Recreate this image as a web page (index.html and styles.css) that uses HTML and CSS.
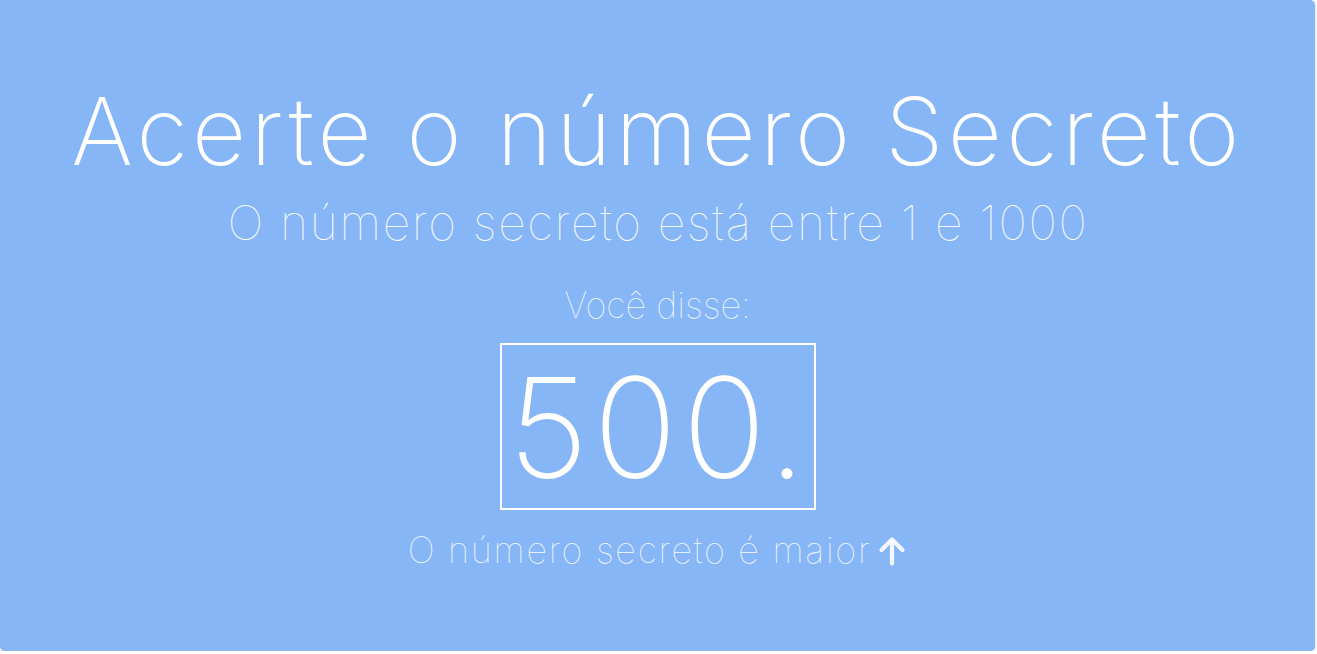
FILE: index.html
```html
<!DOCTYPE html>
<html lang="pt-BR">
<head>
<meta charset="utf-8">
<title>Acerte o número Secreto</title>
<link rel="stylesheet" href="styles.css">
</head>
<body>
<main class="panel">
  <h1 class="title">Acerte o número Secreto</h1>
  <h3 class="subtitle">O número secreto está entre 1 e 1000</h3>
  <p class="said">Você disse:</p>
  <div class="guess-box"><span class="guess">500.</span></div>
  <div class="hint">
    <span>O número secreto é maior</span>
    <svg class="arrow" width="30" height="31" viewBox="0 0 30 31" aria-hidden="true">
      <path d="M15 28.5V4.5M4.5 15L15 4.5L25.5 15" fill="none" stroke="#f3f7ff" stroke-width="4.2" stroke-linecap="round" stroke-linejoin="round"/>
    </svg>
  </div>
</main>
</body>
</html>
```
FILE: styles.css
```css
html, body {
  margin: 0;
  padding: 0;
  background: #ffffff;
}

.panel {
  box-sizing: border-box;
  width: 1315px;
  height: 651px;
  background: #87b6f7;
  border-radius: 0 5px 5px 5px;
  box-shadow: 0 1px 3px rgba(0, 0, 0, 0.18);
  display: flex;
  flex-direction: column;
  align-items: center;
  padding-top: 84px;
  font-family: "Inter", "Noto Sans", sans-serif;
  font-weight: 100;
  color: #ffffff;
}

.title {
  margin: 0;
  font-size: 94px;
  line-height: 1;
  font-weight: 150;
  letter-spacing: 4.3px;
  padding-left: 0;
  white-space: nowrap;
}

.subtitle {
  margin: 21px 0 0;
  font-size: 48px;
  line-height: 1;
  font-weight: 100;
  letter-spacing: 1.65px;
  padding-left: 1px;
  color: #f4f8ff;
  white-space: nowrap;
}

.said {
  margin: 40px 0 0;
  font-size: 36px;
  line-height: 1;
  color: #f4f8ff;
  white-space: nowrap;
}

.guess-box {
  box-sizing: border-box;
  margin-top: 20px;
  width: 316px;
  height: 167px;
  border: 2px solid #ffffff;
  padding-top: 13px;
  text-align: center;
}

.guess {
  display: inline-block;
  font-size: 139px;
  line-height: 1;
  font-weight: 170;
  letter-spacing: 5px;
  padding-left: 4px;
}

.hint {
  margin-top: 22px;
  display: flex;
  align-items: center;
  gap: 6px;
  font-size: 36px;
  line-height: 1;
  color: #f4f8ff;
  letter-spacing: 1.7px;
  white-space: nowrap;
}

.arrow {
  display: block;
  flex: none;
}
```
